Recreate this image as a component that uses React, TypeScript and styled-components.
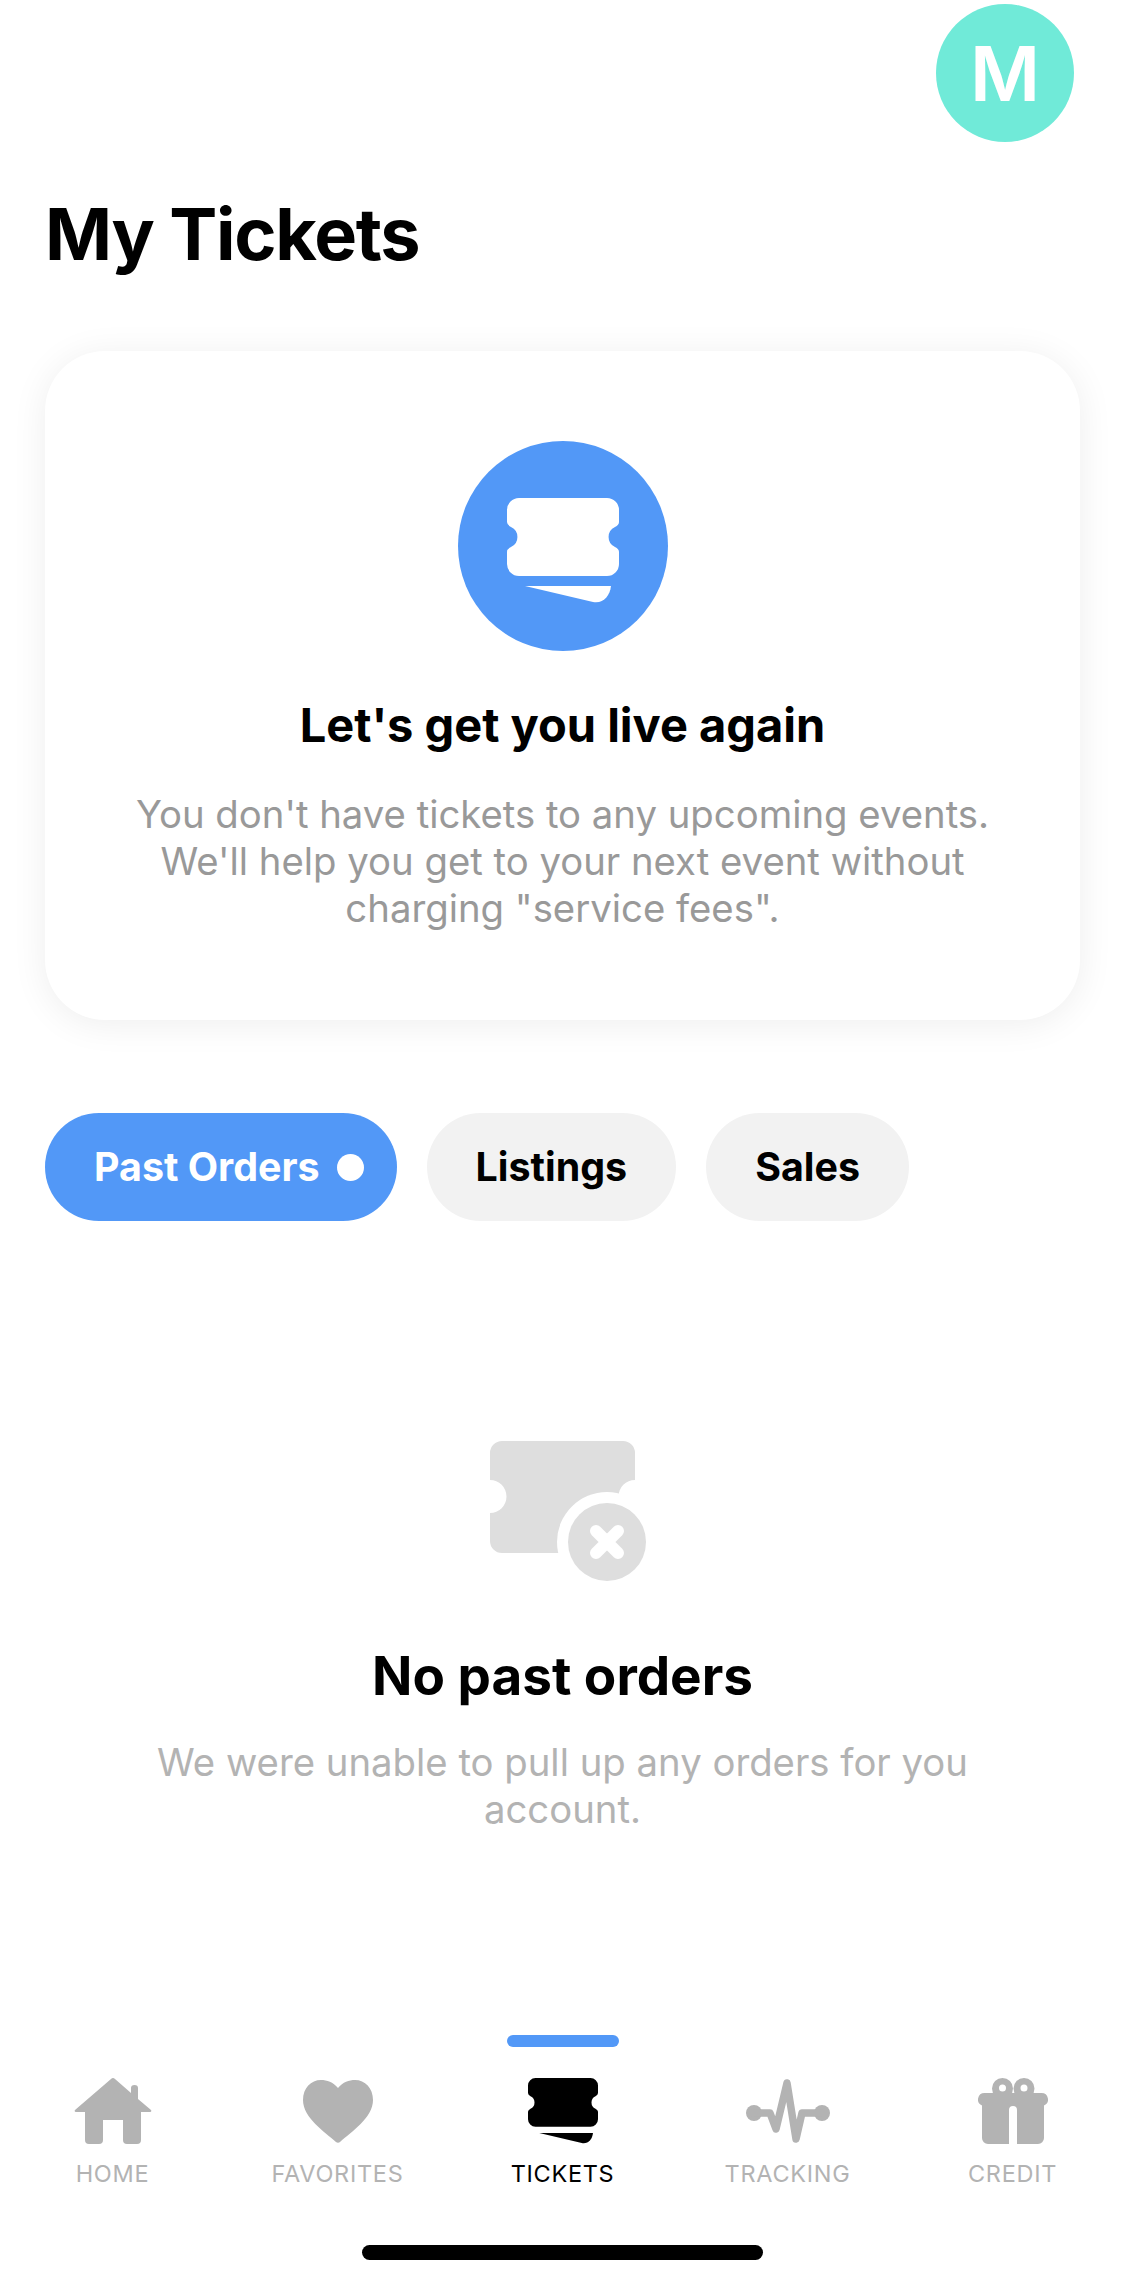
import React from 'react'
import styled, { createGlobalStyle } from 'styled-components'

const GlobalStyle = createGlobalStyle`
  html, body {
    margin: 0;
    padding: 0;
    background: #fff;
    font-family: Inter, "Liberation Sans", sans-serif;
  }
`

const Page = styled.div`
  width: 1125px;
  height: 2284px;
  display: flex;
  flex-direction: column;
  overflow: hidden;
`

const Main = styled.main`
  flex: 1;
  padding: 4px 45px 0;
`

const TopBar = styled.header`
  display: flex;
  justify-content: flex-end;
  padding-right: 6px;
`

const Avatar = styled.div`
  width: 138px;
  height: 138px;
  border-radius: 50%;
  background: #70ead8;
  color: #fff;
  font-size: 76px;
  font-weight: 600;
  display: flex;
  align-items: center;
  justify-content: center;
`

const Title = styled.h1`
  margin: 48px 0 0;
  font-size: 72px;
  line-height: 88px;
  font-weight: 700;
  letter-spacing: -1.3px;
  color: #000;
`

const Card = styled.section`
  margin-top: 73px;
  height: 669px;
  box-sizing: border-box;
  padding-top: 90px;
  border-radius: 60px;
  background: #fff;
  box-shadow: 0 4px 36px rgba(0, 0, 0, 0.07);
  display: flex;
  flex-direction: column;
  align-items: center;
`

const Badge = styled.div`
  width: 210px;
  height: 210px;
  border-radius: 50%;
  background: #5298f7;
  display: flex;
  align-items: center;
  justify-content: center;
  padding-top: 9px;
  box-sizing: border-box;
`

const Heading = styled.h2<{ $top: number; $size: number }>`
  margin: ${p => p.$top}px 0 0;
  font-size: ${p => p.$size}px;
  line-height: 56px;
  font-weight: 700;
  color: #000;
  text-align: center;
`

const Body = styled.p<{ $muted?: boolean; $top: number }>`
  margin: ${p => p.$top}px 0 0;
  font-size: 38.3px;
  line-height: 47px;
  font-weight: 400;
  text-align: center;
  color: ${p => (p.$muted ? '#b3b3b3' : '#999')};
`

const Pills = styled.div`
  margin-top: 93px;
  display: flex;
  gap: 30px;
`

const Pill = styled.button<{ $active?: boolean }>`
  height: 108px;
  border: 0;
  border-radius: 54px;
  padding: ${p => (p.$active ? '0 33px 0 49px' : '0 49px')};
  display: flex;
  align-items: center;
  gap: 17px;
  font-family: inherit;
  font-size: 39.4px;
  font-weight: 700;
  color: ${p => (p.$active ? '#fff' : '#000')};
  background: ${p => (p.$active ? '#5298f7' : '#f2f2f2')};
`

const Dot = styled.span`
  width: 27px;
  height: 27px;
  border-radius: 50%;
  background: #fff;
`

const Empty = styled.section`
  margin-top: 220px;
  display: flex;
  flex-direction: column;
  align-items: center;
`

const EmptyIcon = styled.svg`
  width: 156px;
  height: 140px;
  margin-left: 10px;
`

const EmptyBody = styled(Body)`
  width: 860px;
`

const CardBody = styled(Body)`
  width: 900px;
`

const Nav = styled.nav`
  display: grid;
  grid-template-columns: repeat(5, 225px);
`

const Tab = styled.div<{ $active?: boolean }>`
  display: flex;
  flex-direction: column;
  align-items: center;
  color: ${p => (p.$active ? '#000' : '#b3b3b3')};
`

const Indicator = styled.div<{ $active?: boolean }>`
  width: 112px;
  height: 12px;
  border-radius: 6px;
  background: ${p => (p.$active ? '#5298f7' : 'transparent')};
`

const IconSlot = styled.div`
  height: 72px;
  margin-top: 28px;
  display: flex;
  align-items: center;
  justify-content: center;
  fill: currentColor;
  stroke: none;
`

const TabLabel = styled.span`
  margin-top: 12px;
  font-size: 23.5px;
  line-height: 30px;
  letter-spacing: 0.7px;
`

const HomeBarRow = styled.div`
  height: 95px;
  box-sizing: border-box;
  padding-top: 56px;
  display: flex;
  justify-content: center;
`

const HomeBar = styled.div`
  width: 401px;
  height: 15px;
  border-radius: 8px;
  background: #000;
`

const TICKET =
  'M12 0H100a12 12 0 0 1 12 12V24Q112 27 108 29A11 11 0 0 0 108 49Q112 51 112 54V66a12 12 0 0 1-12 12H12a12 12 0 0 1-12-12V54Q0 51 4 49A11 11 0 0 0 4 29Q0 27 0 24V12A12 12 0 0 1 12 0Z'
const TICKET_TAIL = 'M18 88H104C103 98 96 106 86 104Z'

const TicketGlyph = ({ width, fill }: { width: number; fill: string }) => (
  <svg width={width} height={(width * 106) / 112} viewBox="0 0 112 106" fill={fill}>
    <path d={TICKET} />
    <path d={TICKET_TAIL} />
  </svg>
)

const HomeIcon = () => (
  <svg width="78" height="66" viewBox="0 0 78 66">
    <path d="M37 1Q39-1 41 1L57 15V10Q57 7 60.5 7T64 10V21L77 32Q78 34 76 34H67V62Q67 66 63 66H53Q49 66 49 62V42H29V62Q29 66 25 66H15Q11 66 11 62V34H2Q0 34 1 32Z" />
  </svg>
)

const HeartIcon = () => (
  <svg width="70" height="63" viewBox="0 0 70 63">
    <path d="M35 8C30 2 24 0 18 0 8 0 0 8 0 20 0 38 22 52 33 62 34 63 36 63 37 62 48 52 70 38 70 20 70 8 62 0 52 0 46 0 40 2 35 8Z" />
  </svg>
)

const PulseIcon = () => (
  <svg width="84" height="64" viewBox="0 0 84 64">
    <circle cx="8" cy="34" r="8" />
    <circle cx="76" cy="34" r="8" />
    <path
      d="M8 34H24L30 50 41 4 50 60 56 34H76"
      fill="none"
      stroke="currentColor"
      strokeWidth="7.5"
      strokeLinecap="round"
      strokeLinejoin="round"
    />
  </svg>
)

const GiftIcon = () => (
  <svg width="70" height="66" viewBox="0 0 70 66">
    <path
      fillRule="evenodd"
      d="M24.5 0a10.5 10.5 0 1 1 0 21 10.5 10.5 0 1 1 0-21ZM24.5 6.500a3.500 3.500 0 1 0 0 7 3.500 3.500 0 1 0 0-7ZM46 0a10.500 10.500 0 1 1 0 21 10.500 10.500 0 1 1 0-21ZM46 6.500a3.500 3.500 0 1 0 0 7 3.500 3.500 0 1 0 0-7Z"
    />
    <path d="M6.500 15H63.500a6.500 6.500 0 0 1 2.500 12.500V60a6 6 0 0 1-6 6H39V32a4 4 0 0 0-8 0V66H10a6 6 0 0 1-6-6V27.500A6.500 6.500 0 0 1 6.500 15Z" />
  </svg>
)

const tabs = [
  { label: 'HOME', icon: <HomeIcon /> },
  { label: 'FAVORITES', icon: <HeartIcon /> },
  { label: 'TICKETS', icon: <TicketGlyph width={70} fill="#000" />, active: true },
  { label: 'TRACKING', icon: <PulseIcon /> },
  { label: 'CREDIT', icon: <GiftIcon /> },
]

export default function App() {
  return (
    <Page>
      <GlobalStyle />
      <Main>
        <TopBar>
          <Avatar>M</Avatar>
        </TopBar>
        <Title>My Tickets</Title>

        <Card>
          <Badge>
            <TicketGlyph width={112} fill="#fff" />
          </Badge>
          <Heading $top={46} $size={47}>Let's get you live again</Heading>
          <CardBody $top={38}>
            You don't have tickets to any upcoming events.
            <br />
            We'll help you get to your next event without
            <br />
            charging "service fees".
          </CardBody>
        </Card>

        <Pills>
          <Pill $active>
            Past Orders
            <Dot />
          </Pill>
          <Pill>Listings</Pill>
          <Pill>Sales</Pill>
        </Pills>

        <Empty>
          <EmptyIcon viewBox="0 0 156 140">
            <path
              fill="#dedede"
              d="M12 0H133a12 12 0 0 1 12 12V39a16 16 0 0 0 0 33V100a12 12 0 0 1-12 12H12a12 12 0 0 1-12-12V72a16 16 0 0 0 0-33V12A12 12 0 0 1 12 0Z"
            />
            <circle cx="117" cy="101" r="50" fill="#fff" />
            <circle cx="117" cy="101" r="39" fill="#dedede" />
            <path d="M106 90L128 112M128 90L106 112" stroke="#fff" strokeWidth="12" strokeLinecap="round" />
          </EmptyIcon>
          <Heading $top={67} $size={53}>No past orders</Heading>
          <EmptyBody $muted $top={35}>
            We were unable to pull up any orders for you account.
          </EmptyBody>
        </Empty>
      </Main>

      <Nav>
        {tabs.map(({ label, icon, active }) => (
          <Tab key={label} $active={active}>
            <Indicator $active={active} />
            <IconSlot>{icon}</IconSlot>
            <TabLabel>{label}</TabLabel>
          </Tab>
        ))}
      </Nav>
      <HomeBarRow>
        <HomeBar />
      </HomeBarRow>
    </Page>
  )
}
